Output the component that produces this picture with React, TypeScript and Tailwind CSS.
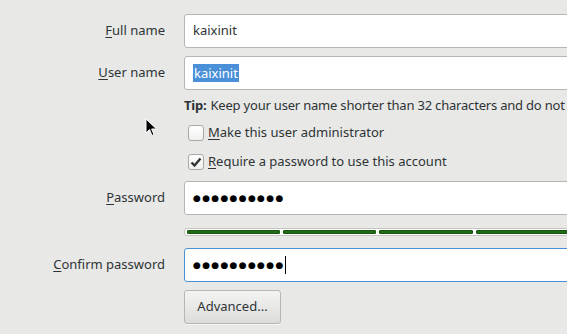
import React from 'react';

const Mn: React.FC<{ c: string; rest: string }> = ({ c, rest }) => (
    <>
        <span className="underline underline-offset-2 decoration-1">{c}</span>
        {rest}
    </>
);

const Label: React.FC<{ children: React.ReactNode }> = ({ children }) => (
    <div className="w-[165px] shrink-0 text-right">{children}</div>
);

const Entry: React.FC<{ children: React.ReactNode; focused?: boolean }> = ({ children, focused }) => (
    <div
        className={
            'ml-[19px] w-[484px] shrink-0 h-[34px] flex items-center pl-[8px] bg-white rounded-[3px] border ' +
            (focused ? 'border-[#4a90d9]' : 'border-[#b6b6b3]')
        }
    >
        {children}
    </div>
);

const Check: React.FC<{ checked?: boolean }> = ({ checked }) => (
    <div className="w-[16px] h-[16px] rounded-[3px] border border-[#a8a8a5] bg-gradient-to-b from-[#ffffff] to-[#f0f0ef] flex items-center justify-center">
        {checked && (
            <svg width="12" height="11" viewBox="0 0 12 11">
                <path d="M1.5 5.5 L4.5 8.5 L10.5 1.5" stroke="#2e3436" strokeWidth="2.4" fill="none" />
            </svg>
        )}
    </div>
);

const Dots: React.FC = () => (
    <span className="text-[9px] tracking-[1.3px] text-black">●●●●●●●●●●</span>
);

const App: React.FC = () => {
    return (
        <div
            className="w-[567px] h-[334px] overflow-hidden bg-[#e8e8e7] text-[#2e3436] text-[13px] relative"
            style={{ fontFamily: '"Noto Sans", "DejaVu Sans", sans-serif' }}
        >
            <div className="pt-[14px] flex flex-col">
                <div className="flex items-center h-[34px]">
                    <Label><Mn c="F" rest="ull name" /></Label>
                    <Entry>kaixinit</Entry>
                </div>
                <div className="flex items-center h-[34px] mt-[8px]">
                    <Label><Mn c="U" rest="ser name" /></Label>
                    <Entry>
                        <span className="bg-[#4a90d9] text-white px-[1px] leading-[18px]">kaixinit</span>
                    </Entry>
                </div>
                <div className="flex items-center h-[16px] mt-[8px] pl-[184px] whitespace-nowrap tracking-[-0.2px]">
                    <span className="font-bold mr-[4px]">Tip:</span>
                    Keep your user name shorter than 32 characters and do not use spaces
                </div>
                <div className="flex items-center h-[20px] mt-[9px] pl-[188px] gap-[4px] whitespace-nowrap">
                    <Check />
                    <span><Mn c="M" rest="ake this user administrator" /></span>
                </div>
                <div className="flex items-center h-[20px] mt-[9px] pl-[188px] gap-[4px] whitespace-nowrap">
                    <Check checked />
                    <span><Mn c="R" rest="equire a password to use this account" /></span>
                </div>
                <div className="flex items-center h-[34px] mt-[9px]">
                    <Label><Mn c="P" rest="assword" /></Label>
                    <Entry>
                        <Dots />
                    </Entry>
                </div>
                <div className="flex items-center h-[8px] mt-[13px] pl-[184px]">
                    <div className="w-[484px] shrink-0 h-[8px] rounded-[3px] border border-[#c4c4c1] bg-white flex gap-[3px] px-[2px] py-[1px]">
                        <div className="flex-1 bg-[#206b16] border border-[#17550f] rounded-[1px]" />
                        <div className="flex-1 bg-[#206b16] border border-[#17550f] rounded-[1px]" />
                        <div className="flex-1 bg-[#206b16] border border-[#17550f] rounded-[1px]" />
                        <div className="flex-1 bg-[#206b16] border border-[#17550f] rounded-[1px]" />
                        <div className="flex-1 bg-[#206b16] border border-[#17550f] rounded-[1px]" />
                    </div>
                </div>
                <div className="flex items-center h-[34px] mt-[12px]">
                    <Label><Mn c="C" rest="onfirm password" /></Label>
                    <Entry focused>
                        <Dots />
                        <span className="w-px h-[18px] bg-black" />
                    </Entry>
                </div>
                <div className="flex items-center mt-[8px] pl-[184px]">
                    <button className="w-[97px] h-[34px] rounded-[3px] border border-[#b6b6b3] bg-gradient-to-b from-[#f4f4f3] to-[#dcdcda] text-[#2e3436] shadow-[0_1px_0_rgba(255,255,255,0.6)]">
                        Advanced...
                    </button>
                </div>
            </div>
            <svg className="absolute left-[145px] top-[118px]" width="13" height="20" viewBox="0 0 13 20">
                <path d="M1 1 L1 15 L4.5 11.5 L7 17.5 L9 16.6 L6.6 11 L11.5 11 Z" fill="#000" stroke="#fff" strokeWidth="1" />
            </svg>
        </div>
    );
};

export default App;
